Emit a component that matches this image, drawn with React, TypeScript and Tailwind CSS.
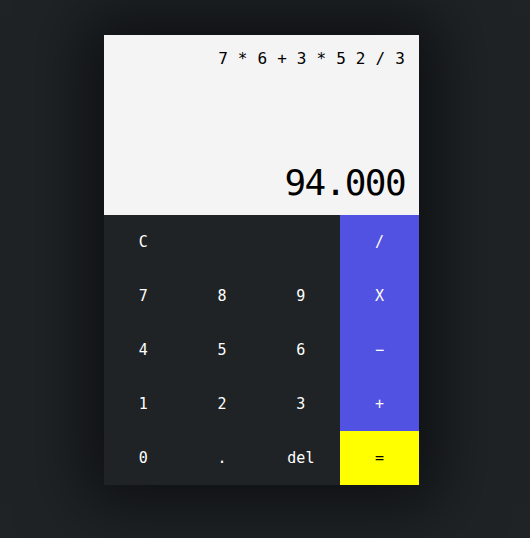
const keys: { label: string; cls: string }[] = [
  { label: "C", cls: "bg-[#1f2326] text-white" },
  { label: "", cls: "bg-[#1f2326]" },
  { label: "", cls: "bg-[#1f2326]" },
  { label: "/", cls: "bg-[#5152e1] text-white" },
  { label: "7", cls: "bg-[#1f2326] text-white" },
  { label: "8", cls: "bg-[#1f2326] text-white" },
  { label: "9", cls: "bg-[#1f2326] text-white" },
  { label: "X", cls: "bg-[#5152e1] text-white" },
  { label: "4", cls: "bg-[#1f2326] text-white" },
  { label: "5", cls: "bg-[#1f2326] text-white" },
  { label: "6", cls: "bg-[#1f2326] text-white" },
  { label: "−", cls: "bg-[#5152e1] text-white" },
  { label: "1", cls: "bg-[#1f2326] text-white" },
  { label: "2", cls: "bg-[#1f2326] text-white" },
  { label: "3", cls: "bg-[#1f2326] text-white" },
  { label: "+", cls: "bg-[#5152e1] text-white" },
  { label: "0", cls: "bg-[#1f2326] text-white" },
  { label: ".", cls: "bg-[#1f2326] text-white" },
  { label: "del", cls: "bg-[#1f2326] text-white" },
  { label: "=", cls: "bg-[#ffff00] text-black" },
];

export default function App() {
  return (
    <div className="min-h-[538px] bg-[#1f2326] pt-[35px] font-['DejaVu_Sans_Mono',monospace]">
      <div className="ml-[104px] w-[315px] shadow-[0_0_60px_20px_rgba(0,0,0,0.55)]">
        {/* display */}
        <div className="flex h-[180px] flex-col items-end justify-between bg-[#f4f4f4] pb-[12px] pr-[14px] pt-[13px] text-black">
          <div className="text-[16px] leading-[22px] tracking-[0.2px]">7 * 6 + 3 * 5 2 / 3</div>
          <div className="text-[36px] leading-[40px] tracking-[-1.6px]">94.000</div>
        </div>
        <div className="grid grid-cols-4">
          {keys.map((k, i) => (
            <button
              key={i}
              className={`flex h-[54px] items-center justify-center text-[15px] ${k.cls}`}
            >
              {k.label}
            </button>
          ))}
        </div>
      </div>
    </div>
  );
}
